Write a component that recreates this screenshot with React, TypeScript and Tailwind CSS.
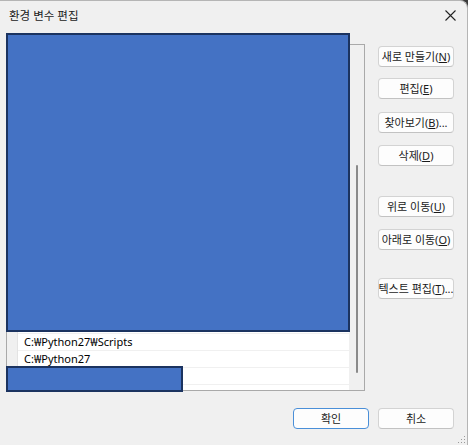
import React from "react";

const font = { fontFamily: '"Noto Sans", "Noto Sans CJK KR", sans-serif' };

function Btn({ children, primary = false, mt = "" }: { children: React.ReactNode; primary?: boolean; mt?: string }) {
  return (
    <div
      className={`${mt} flex h-[21px] w-[76px] items-center justify-center whitespace-nowrap rounded-[4px] border bg-[#fdfdfd] text-[11px] leading-none text-[#1a1a1a] ${
        primary ? "border-[#4a8fd8]" : "border-[#d3d3d3] border-b-[#c2c2c2]"
      }`}
    >
      {children}
    </div>
  );
}

export default function App() {
  const hidden = Array.from({ length: 17 });
  return (
    <div className="relative h-[445px] w-[468px] overflow-hidden bg-[#3b3b3b]" style={font}>
      <div className="flex h-full w-full flex-col rounded-tr-[8px] border-r border-t border-[#b5b5b5] bg-[#f0f0f0]">
        {/* title bar */}
        <div className="flex h-[29px] items-center justify-between pl-[9px] pr-[11px]">
          <span className="text-[11.5px] text-[#1a1a1a]">환경 변수 편집</span>
          <svg width="11" height="11" viewBox="0 0 11 11">
            <path d="M0.5 0.5 L10.5 10.5 M10.5 0.5 L0.5 10.5" stroke="#222" strokeWidth="1.1" />
          </svg>
        </div>

        {/* content */}
        <div className="mt-[14px] flex pl-[6px]">
          {/* list box */}
          <div className="flex h-[347px] w-[359px] border border-[#a9a9a9] bg-[#f0f0f0]">
            <div className="w-[11px] border-r border-[#e3e3e3]" />
            <div className="flex w-[331px] flex-col overflow-hidden bg-white">
              {hidden.map((_, i) => (
                <div key={i} className="h-[17px] shrink-0 border-b border-[#f0f0f0]" />
              ))}
              <div className="flex h-[17px] shrink-0 items-center border-b border-[#f0f0f0] pl-[6px] text-[11px] text-black">
                C:₩Python27₩Scripts
              </div>
              <div className="flex h-[17px] shrink-0 items-center border-b border-[#f0f0f0] pl-[6px] text-[11px] text-black">
                C:₩Python27
              </div>
              <div className="h-[17px] shrink-0 border-b border-[#f0f0f0]" />
              <div className="h-[17px] shrink-0" />
            </div>
            {/* scrollbar */}
            <div className="flex w-[15px] justify-center bg-[#f0f0f0] pt-[120px]">
              <div className="h-[208px] w-[2px] rounded-full bg-[#8a8a8a]" />
            </div>
          </div>

          {/* right buttons */}
          <div className="ml-[13px] flex flex-col">
            <Btn mt="mt-[2px]">
              새로 만들기(<u>N</u>)
            </Btn>
            <Btn mt="mt-[11px]">
              편집(<u>E</u>)
            </Btn>
            <Btn mt="mt-[13px]">
              찾아보기(<u>B</u>)...
            </Btn>
            <Btn mt="mt-[12px]">
              삭제(<u>D</u>)
            </Btn>
            <Btn mt="mt-[30px]">
              위로 이동(<u>U</u>)
            </Btn>
            <Btn mt="mt-[12px]">
              아래로 이동(<u>O</u>)
            </Btn>
            <Btn mt="mt-[28px]">
              텍스트 편집(<u>T</u>)...
            </Btn>
          </div>
        </div>

        {/* bottom buttons */}
        <div className="mt-[17px] flex justify-end gap-[9px] pr-[13px]">
          <Btn primary>확인</Btn>
          <Btn>취소</Btn>
        </div>
      </div>

      {/* resize grip */}
      <svg className="absolute bottom-[1px] right-[2px]" width="9" height="9" viewBox="0 0 9 9">
        <rect x="7" y="1" width="1" height="1" fill="#9a9a9a" />
        <rect x="4" y="4" width="1" height="1" fill="#9a9a9a" />
        <rect x="7" y="4" width="1" height="1" fill="#9a9a9a" />
        <rect x="1" y="7" width="1" height="1" fill="#9a9a9a" />
        <rect x="4" y="7" width="1" height="1" fill="#9a9a9a" />
        <rect x="7" y="7" width="1" height="1" fill="#9a9a9a" />
      </svg>

      {/* redaction overlays */}
      <div className="absolute left-[6px] top-[33px] h-[299px] w-[344px] border-2 border-[#1b3360] bg-[#4472c4]" />
      <div className="absolute left-[6px] top-[366px] h-[26px] w-[177px] border-2 border-[#1b3360] bg-[#4472c4]" />
    </div>
  );
}
